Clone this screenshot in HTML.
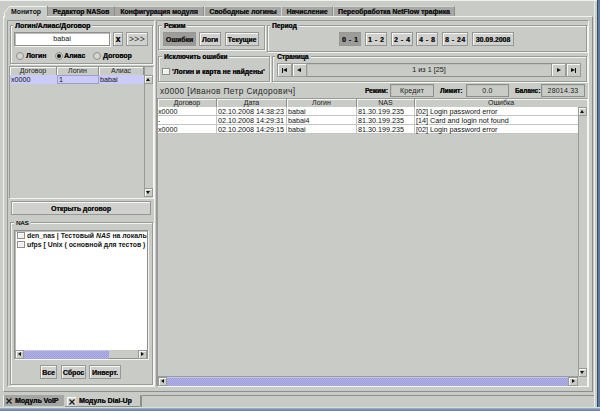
<!DOCTYPE html>
<html><head><meta charset="utf-8">
<style>
*{margin:0;padding:0;box-sizing:border-box}
html,body{width:600px;height:411px;overflow:hidden;background:#c9cbc7;font-family:"Liberation Sans",sans-serif;font-size:7px;color:#111}
body{position:relative}
.a{position:absolute;white-space:nowrap}
.tab,.gt,.btn,.lbl{text-shadow:0.2px 0 0 #1a1a1a}
.tab{position:absolute;top:6px;height:10px;background:#a7a8a5;border:1px solid #8d8e8b;border-top-color:#d4d5d2;border-left-color:#d4d5d2;border-bottom:none;font-weight:bold;font-size:6.9px;line-height:9px;text-align:center;color:#1a1a1a;white-space:nowrap}
.tab.sel{background:#c9cbc7;border-color:#f2f2f0 #8d8e8b #8d8e8b #f2f2f0;height:12px}
.grp{position:absolute;border:1px solid #9a9b98;box-shadow:inset 1px 1px #f4f4f2,1px 1px #f4f4f2}
.gt{position:absolute;background:#c9cbc7;font-weight:bold;font-size:6.6px;line-height:8px;padding:0 2px;white-space:nowrap}
.btn{position:absolute;border:1px solid #979895;box-shadow:inset 1px 1px #f7f7f5;background:#d0d1ce;font-weight:bold;font-size:6.9px;text-align:center;color:#1a1a1a;white-space:nowrap}
.btn.pr{background:#9c9d9a;box-shadow:none}
.fld{position:absolute;border:1px solid #8e8f8c;box-shadow:inset 1px 1px #bdbebb, 1px 1px #f4f4f2;white-space:nowrap;overflow:hidden}
.white{background:#fff}
.sb{position:absolute;background:#c9cbc7}
.thumb{position:absolute;background-color:#a7a7df;background-image:repeating-conic-gradient(#b3b3ea 0 25%,#9d9dd6 0 50%);background-size:2px 2px;box-shadow:inset 0 1px #c4c4f4}
.hd{position:absolute;height:8px;border-right:1px solid #8e8f8c;box-shadow:inset 1px 1px #f4f4f2;font-size:7px;line-height:8px;text-align:center;color:#222;white-space:nowrap}
.cell{position:absolute;height:9px;font-size:7.2px;line-height:9px;white-space:nowrap;overflow:hidden;padding-left:1px}
.row{position:absolute;height:9px;background:#fff;border-bottom:1px solid #c4c5c2}
.arr{position:absolute;border:1px solid #9a9b98;box-shadow:inset 1px 1px #f7f7f5;background:#c9cbc7}
.tri{position:absolute;width:0;height:0}
.radio{position:absolute;width:8px;height:8px;border-radius:50%;border:1px solid #8e8f8c;background:#d6d6d4}
.cb{position:absolute;width:8px;height:7px;border:1px solid #8e8f8c;box-shadow:inset 1px 1px #fff;background:#f0f0ee}
.lbl{position:absolute;font-weight:bold;font-size:6.9px;white-space:nowrap;line-height:8px}
</style></head><body>
<!-- window top line -->
<div class="a" style="left:0;top:0;width:597px;height:1px;background:#f0f0ee"></div>
<div class="a" style="left:597px;top:0;width:3px;height:411px;background:#5a7aa0;border-left:1px solid #3a4a60"></div>

<!-- top tabs -->
<div class="tab" style="left:114px;width:90px">Конфигурация модуля</div>
<div class="tab" style="left:204px;width:78px">Свободные логины</div>
<div class="tab" style="left:281px;width:52px">Начисление</div>
<div class="tab" style="left:333px;width:122px">Переобработка NetFlow трафика</div>
<div class="tab" style="left:47px;width:68px">Редактор NASов</div>
<svg class="a" style="left:3px;top:5px" width="46" height="13"><path d="M0 13 L0 8 L6 1.5 L44.5 1.5 L44.5 13 Z" fill="#c9cbc7"/><path d="M1.5 13 L1.5 7.5 L6.5 1.5 L44 1.5" fill="none" stroke="#f2f2f0" stroke-width="1"/><path d="M44.5 1 L44.5 11" fill="none" stroke="#8d8e8b" stroke-width="1"/></svg>
<div class="a" style="left:11px;top:7px;font-weight:bold;font-size:6.9px;line-height:9px">Монитор</div>

<!-- tab pane content border -->
<div class="a" style="left:3px;top:16px;width:590px;height:376px;border-top:1px solid #f2f2f0;border-left:1px solid #f2f2f0;border-right:1px solid #8d8e8b;border-bottom:1px solid #8d8e8b"></div>
<div class="a" style="left:594px;top:0;width:1px;height:408px;background:#ececea"></div>
<div class="a" style="left:5px;top:16px;width:42px;height:2px;background:#c9cbc7"></div>

<!-- ============ left panel ============ -->
<div class="a" style="left:7px;top:20px;width:148px;height:367px;border-top:1px solid #9a9b98;border-left:1px solid #9a9b98;border-right:1px solid #f4f4f2;border-bottom:1px solid #f4f4f2"></div>
<div class="grp" style="left:10px;top:25px;width:143px;height:39px"></div>
<div class="gt" style="left:13px;top:22px;font-size:7px">Логин/Алиас/Договор</div>
<div class="fld white" style="left:14px;top:32px;width:96px;height:14px;text-align:center;line-height:12px;font-size:7.2px">babai</div>
<div class="btn" style="left:113px;top:32px;width:10px;height:14px;line-height:13px;font-size:8.5px;text-shadow:0.2px 0 0 #000;color:#111">x</div>
<div class="btn" style="left:126px;top:32px;width:22px;height:14px;line-height:13px;font-weight:normal;font-size:8.6px;letter-spacing:0.3px;text-shadow:none;color:#333">&gt;&gt;&gt;</div>
<div class="radio" style="left:16px;top:52px"></div>
<div class="lbl" style="left:26px;top:52px">Логин</div>
<div class="radio" style="left:55px;top:52px"></div>
<div class="a" style="left:57px;top:54px;width:4px;height:4px;border-radius:50%;background:#111"></div>
<div class="lbl" style="left:64px;top:52px">Алиас</div>
<div class="radio" style="left:93px;top:52px"></div>
<div class="lbl" style="left:103px;top:52px">Договор</div>

<!-- table left -->
<div class="a" style="left:9px;top:66px;width:145px;height:133px;border-top:1px solid #9a9b98;border-left:1px solid #9a9b98;border-right:1px solid #f4f4f2;border-bottom:1px solid #f4f4f2;background:#c9cbc7"></div>
<div class="hd" style="left:10px;top:67px;width:47px">Договор</div>
<div class="hd" style="left:57px;top:67px;width:42px">Логин</div>
<div class="hd" style="left:99px;top:67px;width:45px">Алиас</div>
<div class="a" style="left:10px;top:75px;width:134px;height:9px;background:#cbcbfa"></div>
<div class="a" style="left:57px;top:75px;width:42px;height:9px;border:1px solid #9d9dd0"></div>
<div class="cell" style="left:10px;top:75px">x0000</div>
<div class="cell" style="left:58px;top:75px">1</div>
<div class="cell" style="left:99px;top:75px">babai</div>
<div class="sb" style="left:144px;top:67px;width:9px;height:130px;border-left:1px solid #9a9b98"></div>
<div class="arr" style="left:144px;top:75px;width:9px;height:9px"></div>
<div class="tri" style="left:146px;top:78px;border-left:2.5px solid transparent;border-right:2.5px solid transparent;border-bottom:3px solid #111"></div>
<div class="arr" style="left:144px;top:188px;width:9px;height:9px"></div>
<div class="tri" style="left:146px;top:191px;border-left:2.5px solid transparent;border-right:2.5px solid transparent;border-top:3px solid #111"></div>

<!-- open button -->
<div class="btn" style="left:11px;top:201px;width:140px;height:14px;line-height:13px">Открыть договор</div>

<!-- NAS group -->
<div class="grp" style="left:10px;top:222px;width:143px;height:163px"></div>
<div class="gt" style="left:14px;top:219px;font-weight:normal;font-size:6.1px;color:#1a1a1a">NAS</div>
<div class="fld white" style="left:14px;top:230px;width:134px;height:129px"></div>
<div class="cb" style="left:17px;top:232px"></div>
<div class="a" style="left:27px;top:231px;width:120px;overflow:hidden;font-weight:bold;font-size:6.9px;line-height:9px">den_nas | Тестовый <i>NAS</i> на локальн</div>
<div class="cb" style="left:17px;top:241px"></div>
<div class="a" style="left:27px;top:240px;width:120px;overflow:hidden;font-weight:bold;font-size:6.9px;line-height:9px">ufps [ Unix ( основной для тестов )</div>
<div class="sb" style="left:15px;top:350px;width:132px;height:8px"></div>
<div class="arr" style="left:15px;top:350px;width:9px;height:9px"></div>
<div class="tri" style="left:18px;top:352px;border-top:2.5px solid transparent;border-bottom:2.5px solid transparent;border-right:3px solid #111"></div>
<div class="thumb" style="left:24px;top:350px;width:85px;height:9px"></div>
<div class="arr" style="left:138px;top:350px;width:9px;height:9px"></div>
<div class="tri" style="left:141px;top:352px;border-top:2.5px solid transparent;border-bottom:2.5px solid transparent;border-left:3px solid #111"></div>
<div class="btn" style="left:40px;top:365px;width:17px;height:14px;line-height:13px">Все</div>
<div class="btn" style="left:61px;top:365px;width:25px;height:14px;line-height:13px">Сброс</div>
<div class="btn" style="left:89px;top:365px;width:32px;height:14px;line-height:13px">Инверт.</div>

<!-- ============ right panel ============ -->
<div class="a" style="left:156px;top:20px;width:433px;height:367px;border-top:1px solid #9a9b98;border-left:1px solid #9a9b98;border-right:1px solid #f4f4f2;border-bottom:1px solid #f4f4f2"></div>
<div class="grp" style="left:158px;top:25px;width:107px;height:25px"></div>
<div class="gt" style="left:162px;top:22px">Режим</div>
<div class="btn pr" style="left:163px;top:32px;width:33px;height:14px;line-height:13px">Ошибки</div>
<div class="btn" style="left:199px;top:32px;width:22px;height:14px;line-height:13px">Логи</div>
<div class="btn" style="left:225px;top:32px;width:34px;height:14px;line-height:13px">Текущие</div>

<div class="grp" style="left:267px;top:25px;width:320px;height:27px"></div>
<div class="gt" style="left:270px;top:22px">Период</div>
<div class="btn pr" style="left:339px;top:32px;width:22px;height:14px;line-height:13px;letter-spacing:0.5px;padding-left:0.5px">0 - 1</div>
<div class="btn" style="left:365px;top:32px;width:22px;height:14px;line-height:13px;letter-spacing:0.5px;padding-left:0.5px">1 - 2</div>
<div class="btn" style="left:391px;top:32px;width:22px;height:14px;line-height:13px;letter-spacing:0.5px;padding-left:0.5px">2 - 4</div>
<div class="btn" style="left:416px;top:32px;width:22px;height:14px;line-height:13px;letter-spacing:0.5px;padding-left:0.5px">4 - 8</div>
<div class="btn" style="left:442px;top:32px;width:26px;height:14px;line-height:13px;letter-spacing:0.5px;padding-left:0.5px">8 - 24</div>
<div class="btn" style="left:472px;top:32px;width:42px;height:14px;line-height:13px">30.09.2008</div>

<div class="grp" style="left:158px;top:56px;width:112px;height:26px"></div>
<div class="gt" style="left:162px;top:53px">Исключить ошибки</div>
<div class="cb" style="left:162px;top:68px"></div>
<div class="lbl" style="left:172px;top:68px">'Логин и карта не найдены'</div>

<div class="grp" style="left:272px;top:56px;width:315px;height:26px"></div>
<div class="gt" style="left:275px;top:53px">Страница</div>
<div class="fld" style="left:306px;top:63px;width:246px;height:14px;text-align:center;line-height:12px;font-size:7.2px;color:#1a1a1a;box-shadow:inset 1px 1px #bdbebb">1 из 1 [25]</div>
<div class="arr" style="left:277px;top:63px;width:15px;height:14px"></div>
<div class="arr" style="left:292px;top:63px;width:15px;height:14px"></div>
<div class="arr" style="left:551px;top:63px;width:15px;height:14px"></div>
<div class="arr" style="left:566px;top:63px;width:15px;height:14px"></div>
<div class="a" style="left:282px;top:68px;width:1px;height:5px;background:#111"></div>
<div class="tri" style="left:283px;top:68px;border-top:2.5px solid transparent;border-bottom:2.5px solid transparent;border-right:4px solid #111"></div>
<div class="tri" style="left:297px;top:68px;border-top:2.5px solid transparent;border-bottom:2.5px solid transparent;border-right:4px solid #111"></div>
<div class="tri" style="left:557px;top:68px;border-top:2.5px solid transparent;border-bottom:2.5px solid transparent;border-left:4px solid #111"></div>
<div class="tri" style="left:571px;top:68px;border-top:2.5px solid transparent;border-bottom:2.5px solid transparent;border-left:4px solid #111"></div>
<div class="a" style="left:575px;top:68px;width:1px;height:5px;background:#111"></div>

<!-- info row -->
<div class="a" style="left:160px;top:86px;font-size:8.4px;line-height:11px;color:#2a2a2a;letter-spacing:0.35px">x0000 [Иванов Петр Сидорович]</div>
<div class="lbl" style="left:365px;top:87px;font-size:6.4px">Режим:</div>
<div class="fld" style="left:390px;top:84px;width:44px;height:13px;text-align:center;line-height:11px;font-size:7px;color:#1e1e1e;letter-spacing:0.2px;box-shadow:inset 1px 1px #bdbebb">Кредит</div>
<div class="lbl" style="left:440px;top:87px;font-size:6.4px">Лимит:</div>
<div class="fld" style="left:466px;top:84px;width:43px;height:13px;text-align:center;line-height:11px;font-size:7px;color:#1e1e1e;letter-spacing:0.2px;box-shadow:inset 1px 1px #bdbebb">0.0</div>
<div class="lbl" style="left:515px;top:87px;font-size:6.4px">Баланс:</div>
<div class="fld" style="left:541px;top:84px;width:44px;height:13px;text-align:center;line-height:11px;font-size:7px;color:#1e1e1e;letter-spacing:0.2px;box-shadow:inset 1px 1px #bdbebb">28014.33</div>

<!-- right table -->
<div class="a" style="left:157px;top:98px;width:431px;height:289px;border-top:1px solid #9a9b98;border-left:1px solid #9a9b98;border-right:1px solid #f4f4f2;border-bottom:1px solid #f4f4f2;background:#c9cbc7"></div>
<div class="hd" style="left:158px;top:99px;width:59px">Договор</div>
<div class="hd" style="left:217px;top:99px;width:70px">Дата</div>
<div class="hd" style="left:287px;top:99px;width:70px">Логин</div>
<div class="hd" style="left:357px;top:99px;width:58px">NAS</div>
<div class="hd" style="left:415px;top:99px;width:172px;border-right:none">Ошибка</div>
<div class="row" style="left:158px;top:107px;width:420px"></div>
<div class="row" style="left:158px;top:116px;width:420px"></div>
<div class="row" style="left:158px;top:125px;width:420px"></div>
<div class="a" style="left:216px;top:107px;width:1px;height:27px;background:#c4c5c2"></div>
<div class="a" style="left:286px;top:107px;width:1px;height:27px;background:#c4c5c2"></div>
<div class="a" style="left:356px;top:107px;width:1px;height:27px;background:#c4c5c2"></div>
<div class="a" style="left:414px;top:107px;width:1px;height:27px;background:#c4c5c2"></div>
<div class="cell" style="left:157px;top:107px">x0000</div>
<div class="cell" style="left:217px;top:107px">02.10.2008 14:38:23</div>
<div class="cell" style="left:287px;top:107px">babai</div>
<div class="cell" style="left:357px;top:107px">81.30.199.235</div>
<div class="cell" style="left:415px;top:107px">[02] Login password error</div>
<div class="cell" style="left:157px;top:116px">-</div>
<div class="cell" style="left:217px;top:116px">02.10.2008 14:29:31</div>
<div class="cell" style="left:287px;top:116px">babai4</div>
<div class="cell" style="left:357px;top:116px">81.30.199.235</div>
<div class="cell" style="left:415px;top:116px">[14] Card and login not found</div>
<div class="cell" style="left:157px;top:125px">x0000</div>
<div class="cell" style="left:217px;top:125px">02.10.2008 14:29:15</div>
<div class="cell" style="left:287px;top:125px">babai</div>
<div class="cell" style="left:357px;top:125px">81.30.199.235</div>
<div class="cell" style="left:415px;top:125px">[02] Login password error</div>

<div class="sb" style="left:578px;top:107px;width:9px;height:270px;border-left:1px solid #9a9b98"></div>
<div class="arr" style="left:578px;top:107px;width:9px;height:9px"></div>
<div class="tri" style="left:580px;top:110px;border-left:2.5px solid transparent;border-right:2.5px solid transparent;border-bottom:3px solid #111"></div>
<div class="arr" style="left:578px;top:368px;width:9px;height:9px"></div>
<div class="tri" style="left:580px;top:371px;border-left:2.5px solid transparent;border-right:2.5px solid transparent;border-top:3px solid #111"></div>
<div class="sb" style="left:158px;top:376px;width:420px;height:10px;border-top:1px solid #9a9b98"></div>
<div class="arr" style="left:158px;top:377px;width:9px;height:9px"></div>
<div class="tri" style="left:161px;top:379px;border-top:2.5px solid transparent;border-bottom:2.5px solid transparent;border-right:3px solid #111"></div>
<div class="thumb" style="left:167px;top:377px;width:401px;height:9px"></div>
<div class="arr" style="left:568px;top:377px;width:10px;height:9px"></div>
<div class="tri" style="left:572px;top:379px;border-top:2.5px solid transparent;border-bottom:2.5px solid transparent;border-left:3px solid #111"></div>

<!-- bottom tabs -->
<div class="a" style="left:0;top:392px;width:594px;height:16px;background:#c9cbc7"></div>
<div class="a" style="left:141px;top:395px;width:453px;height:12px;border-top:1px solid #8d8e8b;border-left:1px solid #8d8e8b;border-top-left-radius:2px"></div>
<div class="a" style="left:3px;top:395px;width:61px;height:11px;background:#a5a6a3;border-left:1px solid #f0f0ee"></div>
<svg class="a" style="left:6px;top:398px" width="6" height="6"><path d="M0.5 0.5L5.5 5.5M5.5 0.5L0.5 5.5" stroke="#1a1a1a" stroke-width="1.3"/></svg>
<div class="lbl" style="left:15px;top:396px;line-height:10px">Модуль VoIP</div>
<div class="a" style="left:65px;top:395px;width:76px;height:12px;border-right:1px solid #8d8e8b;border-bottom:1px solid #8d8e8b;border-bottom-right-radius:2px"></div>
<div class="a" style="left:67px;top:397px;width:9px;height:9px;background:#d8d9d6;border-top:1px solid #fafafa;border-left:1px solid #fafafa"></div>
<svg class="a" style="left:69px;top:399px" width="6" height="6"><path d="M0.5 0.5L5.5 5.5M5.5 0.5L0.5 5.5" stroke="#1a1a1a" stroke-width="1.3"/></svg>
<div class="lbl" style="left:79px;top:396px;line-height:10px">Модуль Dial-Up</div>
<div class="a" style="left:0;top:407px;width:600px;height:1px;background:#dcdedb"></div>
<div class="a" style="left:0;top:408px;width:600px;height:3px;background:linear-gradient(#9fb4cc,#5d7898)"></div>
</body></html>
